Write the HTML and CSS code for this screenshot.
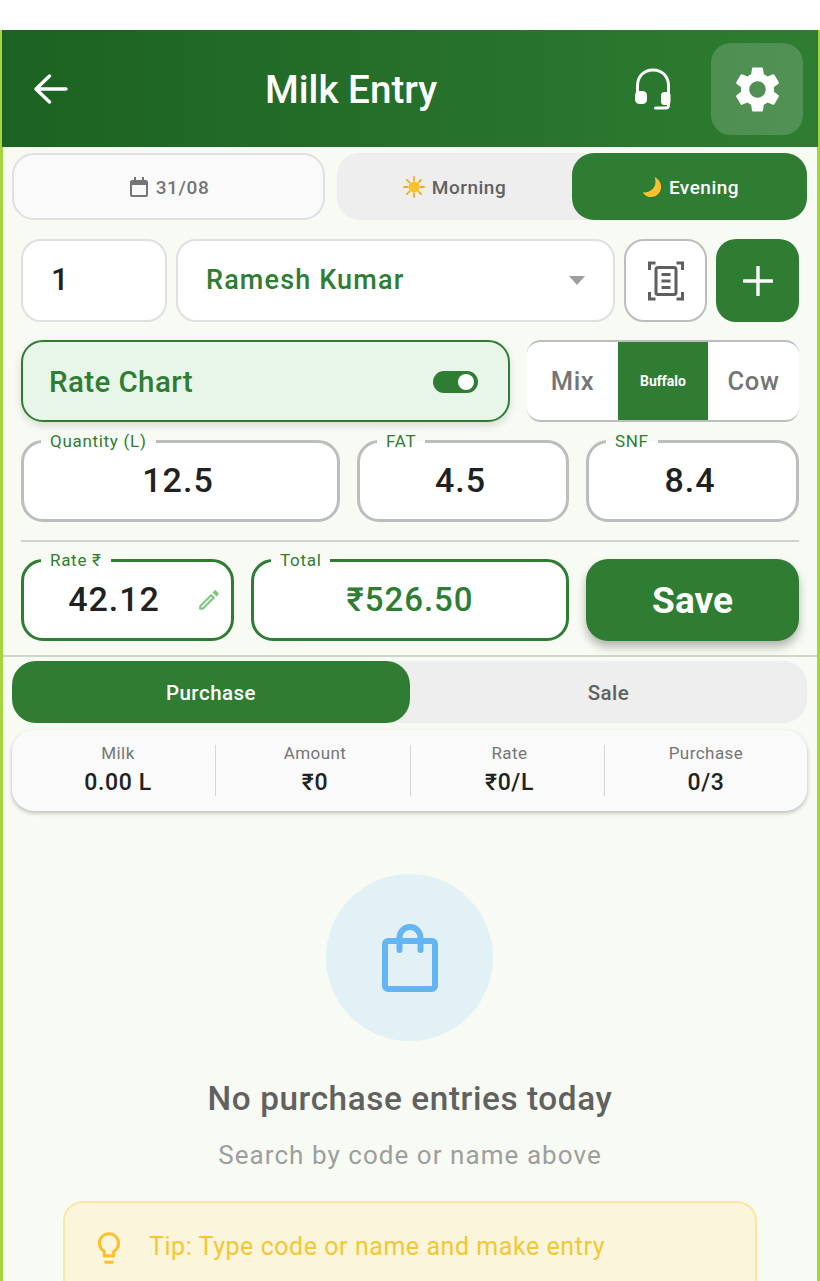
FILE: index.html
```html
<!DOCTYPE html>
<html lang="en">
<head>
    <meta charset="UTF-8">
    <meta name="viewport" content="width=device-width, initial-scale=1.0">
    <title>Milk Entry</title>
    <link rel="stylesheet" href="styles.css">
</head>
<body>
    <div class="app">
        <header class="header">
            <svg class="back-icon" viewBox="0 0 34 30" fill="none" stroke="#fff" stroke-width="3.4" stroke-linecap="round" stroke-linejoin="round">
                <path d="M2 15H32M15.500 2 2 15l13.500 13"/>
            </svg>
            <h1 class="title">Milk Entry</h1>
            <svg class="support-icon" viewBox="0 0 38 42" fill="none" stroke="#fff" stroke-width="3" stroke-linecap="round">
                <path d="M3.500 26V18C3.500 8 10 2 19 2s15.500 6 15.500 16v19c0 2-1 3-3 3h-10"/>
                <rect x="1" y="23" width="12" height="13" rx="4.500" fill="#fff" stroke="none"/>
                <rect x="27" y="24" width="9.500" height="13" rx="3.500" fill="#fff" stroke="none"/>
            </svg>
            <div class="settings-box">
                <svg class="gear-icon" viewBox="0 0 24 24" fill="#fff">
                    <path d="M19.14 12.94c.04-.3.06-.61.06-.94 0-.32-.02-.64-.07-.94l2.03-1.58c.18-.14.23-.41.12-.61l-1.92-3.32c-.12-.22-.37-.29-.59-.22l-2.39.96c-.5-.38-1.03-.7-1.62-.94l-.36-2.54c-.04-.24-.24-.41-.48-.41h-3.84c-.24 0-.43.17-.47.41l-.36 2.54c-.59.24-1.13.57-1.62.94l-2.39-.96c-.22-.08-.47 0-.59.22L2.74 8.87c-.12.21-.08.47.12.61l2.03 1.58c-.05.3-.09.63-.09.94s.02.64.07.94l-2.03 1.58c-.18.14-.23.41-.12.61l1.92 3.32c.12.22.37.29.59.22l2.39-.96c.5.38 1.03.7 1.62.94l.36 2.54c.05.24.24.41.48.41h3.84c.24 0 .44-.17.47-.41l.36-2.54c.59-.24 1.13-.56 1.62-.94l2.39.96c.22.08.47 0 .59-.22l1.92-3.32c.12-.22.07-.47-.12-.61l-2.01-1.58zM12 15.6c-1.98 0-3.6-1.62-3.6-3.6s1.62-3.6 3.6-3.6 3.6 1.62 3.6 3.6-1.62 3.6-3.6 3.6z"/>
                </svg>
            </div>
        </header>

        <div class="date-row">
            <div class="date-pill">
                <svg class="calendar-icon" viewBox="0 0 18 20" fill="#757575">
                    <path d="M4 0h2v3h6V0h2v3h2c1 0 2 1 2 2v13c0 1-1 2-2 2H2c-1 0-2-1-2-2V5c0-1 1-2 2-2h2V0zM2 8v10h14V8H2z"/>
                </svg>
                <span>31/08</span>
            </div>
            <div class="shift-toggle">
                <div class="shift">
                    <svg class="shift-icon" viewBox="0 0 24 24">
                        <g stroke="#f9a825" stroke-width="2" stroke-linecap="round">
                            <path d="M12 1v4M12 19v4M1 12h4M19 12h4M4.200 4.200 7 7M17 17l2.800 2.800M4.200 19.800 7 17M17 7l2.800-2.800"/>
                        </g>
                        <circle cx="12" cy="12" r="6" fill="#fbc02d"/>
                    </svg>
                    <span>Morning</span>
                </div>
                <div class="shift shift-active">
                    <svg class="shift-icon" viewBox="0 0 24 24">
                        <path d="M16 1c3 8-1 17-13 17 3 4 6 5 9 5 7 0 11-6 11-11 0-5-3-9-7-11z" fill="#fbc02d"/>
                    </svg>
                    <span>Evening</span>
                </div>
            </div>
        </div>

        <div class="form">
            <div class="row row-farmer">
                <div class="box code-box">1</div>
                <div class="box name-box">
                    <span>Ramesh Kumar</span>
                    <i class="caret"></i>
                </div>
                <div class="box scan-box">
                    <svg class="scan-icon" viewBox="0 0 36 40" fill="none" stroke="#5f5f5f" stroke-width="3">
                        <path d="M1.500 9V2h6M34.500 9V2h-6M1.500 31v7h6M34.500 31v7h-6"/>
                        <rect x="8" y="6.500" width="20" height="27" rx="2"/>
                        <path d="M13.500 13.500h9M13.500 20h9M13.500 26.500h9"/>
                    </svg>
                </div>
                <div class="add-box">
                    <svg class="plus-icon" viewBox="0 0 30 30" fill="none" stroke="#fff" stroke-width="3.400" stroke-linecap="round">
                        <path d="M15 1v28M1 15h28"/>
                    </svg>
                </div>
            </div>

            <div class="row row-rate">
                <div class="rate-chart">
                    <span>Rate Chart</span>
                    <div class="switch"><i class="switch-dot"></i></div>
                </div>
                <div class="milk-type">
                    <div class="type">Mix</div>
                    <div class="type type-active">Buffalo</div>
                    <div class="type">Cow</div>
                </div>
            </div>

            <div class="row row-values">
                <div class="field value-field"><label class="field-label">Quantity (L)</label><span class="field-value">12.5</span></div>
                <div class="field value-field"><label class="field-label">FAT</label><span class="field-value">4.5</span></div>
                <div class="field value-field"><label class="field-label">SNF</label><span class="field-value">8.4</span></div>
            </div>

            <div class="divider"></div>

            <div class="row row-total">
                <div class="field field-green rate-field">
                    <label class="field-label">Rate ₹</label>
                    <span class="field-value">42.12</span>
                    <svg class="edit-icon" viewBox="0 0 24 24" fill="#81c784">
                        <path d="M14.060 9.020l.92.92L5.920 19H5v-.92l9.060-9.060M17.660 3c-.25 0-.51.1-.7.29l-1.830 1.830 3.750 3.750 1.830-1.830c.39-.39.39-1.020 0-1.410l-2.340-2.340c-.2-.2-.45-.29-.71-.29zm-3.600 3.190L3 17.250V21h3.750L17.810 9.940l-3.750-3.750z"/>
                    </svg>
                </div>
                <div class="field field-green"><label class="field-label">Total</label><span class="field-value total-value">₹526.50</span></div>
                <button class="save-btn">Save</button>
            </div>
        </div>

        <div class="section-line"></div>

        <div class="tabs">
            <div class="tab tab-active">Purchase</div>
            <div class="tab">Sale</div>
        </div>

        <div class="stats">
            <div class="stat"><span class="stat-label">Milk</span><span class="stat-value">0.00 L</span></div>
            <div class="stat"><span class="stat-label">Amount</span><span class="stat-value">₹0</span></div>
            <div class="stat"><span class="stat-label">Rate</span><span class="stat-value">₹0/L</span></div>
            <div class="stat"><span class="stat-label">Purchase</span><span class="stat-value">0/3</span></div>
        </div>

        <div class="empty">
            <div class="empty-circle">
                <svg class="bag-icon" viewBox="0 0 56 68" fill="none" stroke="#64b5f6" stroke-width="6" stroke-linecap="round" stroke-linejoin="round">
                    <rect x="3" y="17" width="50" height="48" rx="3"/>
                    <path d="M17.500 26V14C17.500 8 22 3 28 3s10.500 5 10.500 11v12"/>
                </svg>
            </div>
            <h2 class="empty-title">No purchase entries today</h2>
            <p class="empty-sub">Search by code or name above</p>
            <div class="tip">
                <svg class="tip-icon" viewBox="0 0 24 24" fill="#fbc02d">
                    <path d="M9 21c0 .55.45 1 1 1h4c.55 0 1-.45 1-1v-1H9v1zm3-19C8.140 2 5 5.140 5 9c0 2.380 1.190 4.470 3 5.740V17c0 .55.45 1 1 1h6c.55 0 1-.45 1-1v-2.260c1.810-1.270 3-3.360 3-5.740 0-3.860-3.140-7-7-7zm2.850 11.100l-.85.6V16h-4v-2.300l-.85-.6C7.800 12.160 7 10.630 7 9c0-2.760 2.240-5 5-5s5 2.240 5 5c0 1.630-.8 3.160-2.150 4.100z"/>
                </svg>
                <span>Tip: Type code or name and make entry</span>
            </div>
        </div>
    </div>
</body>
</html>
```
FILE: styles.css
```css
* {
    box-sizing: border-box;
}
html, body {
    margin: 0;
    height: 1281px;
    overflow: hidden;
    background: #fff;
}
body {
    padding-top: 30px;
    font-family: Roboto, "Liberation Sans", sans-serif;
}
.app {
    height: 1251px;
    background: #f8fbf3;
    border-left: 3px solid #a5d63c;
    border-right: 3px solid #a5d63c;
}

/* header */
.header {
    height: 117px;
    margin: 0 -1px;
    padding: 13px 14px 12px 32px;
    display: flex;
    align-items: center;
    background: linear-gradient(90deg, #1c6222, #2e7d32);
}
.back-icon {
    width: 34px;
    height: 30px;
    flex: none;
}
.title {
    margin: 0 0 0 197px;
    width: 369px;
    font-size: 38.600px;
    font-weight: 500;
    color: #fff;
}
.support-icon {
    width: 38px;
    height: 42px;
    flex: none;
}
.settings-box {
    width: 92px;
    height: 92px;
    margin-left: 39px;
    flex: none;
    display: flex;
    align-items: center;
    justify-content: center;
    border-radius: 20px;
    background: rgba(255, 255, 255, 0.17);
}
.gear-icon {
    width: 55px;
    height: 55px;
}

/* date and shift */
.date-row {
    margin-top: 6px;
    padding: 0 10px 0 9px;
    display: flex;
    gap: 12px;
    height: 67px;
}
.date-pill {
    width: 314px;
    padding: 1px 0 0 2px;
    display: flex;
    align-items: center;
    justify-content: center;
    gap: 8px;
    border: 2px solid #e0e0e0;
    border-radius: 22px;
    background: #fafafa;
    font-size: 19px;
    font-weight: 500;
    letter-spacing: 0.6px;
    color: #757575;
}
.calendar-icon {
    width: 18px;
    height: 20px;
}
.shift-toggle {
    flex: 1;
    display: flex;
    border-radius: 22px;
    background: #eeeeee;
}
.shift {
    width: 235px;
    padding-top: 1px;
    display: flex;
    align-items: center;
    justify-content: center;
    gap: 7px;
    font-size: 19px;
    font-weight: 500;
    letter-spacing: 0.5px;
    color: #616161;
}
.shift-active {
    flex: 1;
    border-radius: 22px;
    background: #2e7d32;
    color: #fff;
}
.shift-icon {
    width: 22px;
    height: 22px;
}

/* form */
.form {
    padding: 19px 18px 0;
}
.row {
    display: grid;
    height: 82px;
    margin-bottom: 18px;
}
.row-farmer {
    grid-template-columns: 146px 439px 83px 83px;
    column-gap: 9px;
    height: 83px;
}
.row-rate {
    grid-template-columns: 489px 272px;
    column-gap: 17px;
}
.row-values {
    grid-template-columns: 319px 212px 1fr;
    column-gap: 17px;
    margin-bottom: 18px;
}
.row-total {
    grid-template-columns: 213px 318px 213px;
    column-gap: 17px;
    margin-bottom: 0;
}
.box {
    padding-bottom: 2px;
    display: flex;
    align-items: center;
    border: 2px solid #e0e0e0;
    border-radius: 20px;
    background: #fff;
}
.code-box {
    padding-left: 28px;
    font-size: 31px;
    font-weight: 500;
    color: #212121;
}
.name-box {
    padding: 0 28px 2px;
    justify-content: space-between;
    font-size: 27px;
    font-weight: 500;
    letter-spacing: 1.150px;
    color: #2e7d32;
}
.caret {
    width: 0;
    height: 0;
    margin: 2px 0 0;
    border-left: 8px solid transparent;
    border-right: 8px solid transparent;
    border-top: 9px solid #9e9e9e;
}
.scan-box {
    padding-bottom: 0;
    justify-content: center;
    border-color: #bdbdbd;
}
.scan-icon {
    width: 36px;
    height: 40px;
}
.add-box {
    display: flex;
    align-items: center;
    justify-content: center;
    border-radius: 20px;
    background: #2e7d32;
}
.plus-icon {
    width: 30px;
    height: 30px;
}
.rate-chart {
    padding: 1px 30px 0 26px;
    display: flex;
    align-items: center;
    justify-content: space-between;
    border: 2px solid #2e7d32;
    border-radius: 22px;
    background: #e8f5e9;
    box-shadow: 0 4px 8px rgba(0, 0, 0, 0.12);
    font-size: 29.500px;
    font-weight: 500;
    letter-spacing: 0.4px;
    color: #2e7d32;
}
.switch {
    width: 45px;
    height: 22px;
    padding: 3px 4px;
    display: flex;
    justify-content: flex-end;
    border-radius: 11px;
    background: #2e7d32;
}
.switch-dot {
    width: 16px;
    height: 16px;
    border-radius: 50%;
    background: #fff;
}
.milk-type {
    display: grid;
    grid-template-columns: 91px 90px 91px;
    border-top: 2px solid #bdbdbd;
    border-bottom: 2px solid #bdbdbd;
    border-radius: 14px;
    background: #fff;
    overflow: hidden;
}
.type {
    display: flex;
    align-items: center;
    justify-content: center;
    font-size: 25.500px;
    font-weight: 500;
    letter-spacing: 0.6px;
    color: #757575;
}
.type-active {
    font-size: 14px;
    font-weight: 700;
    letter-spacing: 0;
    color: #fff;
    background: #2e7d32;
}
.field {
    position: relative;
    padding-bottom: 2px;
    display: flex;
    align-items: center;
    justify-content: center;
    border: 3px solid #bdbdbd;
    border-radius: 22px;
    background: #fff;
}
.field-label {
    position: absolute;
    top: -12px;
    left: 17px;
    padding: 0 9px;
    font-size: 17px;
    line-height: 20px;
    letter-spacing: 0.7px;
    color: #2e7d32;
    background: linear-gradient(#f8fbf3 50%, #fff 50%);
}
.value-field {
    padding-right: 5px;
}
.field-value {
    font-size: 34px;
    font-weight: 500;
    letter-spacing: 1px;
    color: #212121;
}
.field-green {
    border-color: #2e7d32;
}
.rate-field {
    padding-right: 27px;
}
.total-value {
    font-size: 33px;
    color: #2e7d32;
}
.edit-icon {
    position: absolute;
    right: 9px;
    top: 25px;
    width: 26px;
    height: 26px;
}
.divider {
    height: 2px;
    margin-bottom: 17px;
    background: #cfd2cc;
}
.save-btn {
    border: none;
    border-radius: 22px;
    background: #2e7d32;
    box-shadow: 0 6px 10px rgba(0, 0, 0, 0.28);
    font-family: inherit;
    font-size: 37px;
    font-weight: 700;
    color: #fff;
}
.section-line {
    height: 2px;
    margin-top: 14px;
    background: #cfd6c9;
}

/* purchase / sale */
.tabs {
    height: 62px;
    margin: 4px 10px 0 9px;
    display: flex;
    border-radius: 24px;
    background: #eeeeee;
}
.tab {
    flex: 1;
    padding-top: 1px;
    display: flex;
    align-items: center;
    justify-content: center;
    border-radius: 24px;
    font-size: 20.500px;
    font-weight: 500;
    letter-spacing: 0.5px;
    color: #616161;
}
.tab-active {
    flex: none;
    width: 398px;
    background: #2e7d32;
    color: #fff;
}
.stats {
    height: 81px;
    margin: 7px 10px 0 9px;
    padding-left: 5px;
    display: grid;
    grid-template-columns: 199px 195px 194px 1fr;
    align-items: center;
    border-radius: 22px;
    background: #fafafa;
    box-shadow: 0 2px 4px rgba(0, 0, 0, 0.25);
}
.stat {
    height: 51px;
    padding-left: 4px;
    display: flex;
    flex-direction: column;
    align-items: center;
    justify-content: space-between;
    border-right: 1px solid #d6d6d6;
}
.stat:last-child {
    padding-left: 0;
    border-right: none;
}
.stat-label {
    margin-top: -2px;
    font-size: 17px;
    line-height: 20px;
    letter-spacing: 0.45px;
    color: #757575;
}
.stat-value {
    font-size: 23px;
    line-height: 26px;
    font-weight: 500;
    letter-spacing: 0.6px;
    color: #212121;
}

/* empty state */
.empty {
    padding-top: 63px;
    display: flex;
    flex-direction: column;
    align-items: center;
}
.empty-circle {
    width: 167px;
    height: 167px;
    margin-right: 1px;
    display: flex;
    align-items: center;
    justify-content: center;
    border-radius: 50%;
    background: #e2f1f5;
}
.bag-icon {
    width: 56px;
    height: 68px;
}
.empty-title {
    margin: 38px 0 0;
    font-size: 33.300px;
    line-height: 40px;
    font-weight: 500;
    letter-spacing: 0.6px;
    color: #616161;
}
.empty-sub {
    margin: 20px 0 0;
    font-size: 26px;
    line-height: 32px;
    letter-spacing: 1.050px;
    color: #9e9e9e;
}
.tip {
    width: 694px;
    height: 100px;
    margin-top: 30px;
    padding: 0 0 9px 26px;
    display: flex;
    align-items: flex-start;
    gap: 21px;
    border: 2px solid #fbe7a3;
    border-radius: 20px;
    background: #fbf5dc;
    font-size: 25px;
    letter-spacing: 0.55px;
    color: #f5c732;
}
.tip span {
    margin-top: 29px;
}
.tip-icon {
    width: 38px;
    height: 38px;
    margin: 26px 0 0 -1px;
    flex: none;
}
```
